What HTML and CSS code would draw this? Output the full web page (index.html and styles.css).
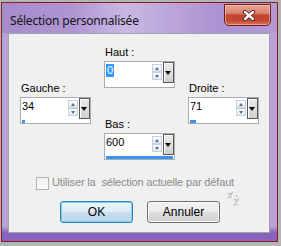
FILE: index.html
```html
<!DOCTYPE html>
<html lang="fr">
<head>
<meta charset="utf-8">
<title>Sélection personnalisée</title>
<link rel="stylesheet" href="styles.css">
</head>
<body>
<div class="window">
  <div class="titlebar">
    <span class="title">Sélection personnalisée</span>
    <div class="close">
      <svg width="14" height="11" viewBox="0 0 14 11">
        <path d="M3 2 L11 9 M11 2 L3 9" stroke="#4a1a14" stroke-width="4.2" stroke-linecap="round" fill="none"/>
        <path d="M3 2 L11 9 M11 2 L3 9" stroke="#ffffff" stroke-width="2.4" stroke-linecap="round" fill="none"/>
      </svg>
    </div>
  </div>
  <div class="frame">
    <div class="client">
      <div class="fields">
        <div class="col col-side">
          <div class="group">
            <div class="label">Gauche :</div>
            <div class="spin">
              <div class="spin-row">
                <div class="val">34</div>
                <div class="arrows"><span class="up"></span><span class="down"></span></div>
                <div class="drop"></div>
              </div>
              <div class="bar"><span class="fill" style="width:3px"></span></div>
            </div>
          </div>
        </div>
        <div class="col col-mid">
          <div class="group">
            <div class="label">Haut :</div>
            <div class="spin">
              <div class="spin-row">
                <div class="val"><span class="sel">0</span></div>
                <div class="arrows"><span class="up"></span><span class="down"></span></div>
                <div class="drop"></div>
              </div>
              <div class="bar"><span class="fill" style="width:0px"></span></div>
            </div>
          </div>
          <div class="group group-bas">
            <div class="label">Bas :</div>
            <div class="spin">
              <div class="spin-row">
                <div class="val">600</div>
                <div class="arrows"><span class="up"></span><span class="down"></span></div>
                <div class="drop"></div>
              </div>
              <div class="bar"><span class="fill" style="width:100%"></span></div>
            </div>
          </div>
        </div>
        <div class="col col-side">
          <div class="group">
            <div class="label">Droite :</div>
            <div class="spin">
              <div class="spin-row">
                <div class="val">71</div>
                <div class="arrows"><span class="up"></span><span class="down"></span></div>
                <div class="drop"></div>
              </div>
              <div class="bar"><span class="fill" style="width:6px"></span></div>
            </div>
          </div>
        </div>
      </div>
      <div class="check">
        <span class="box"></span>
        <span class="check-text">Utiliser la&nbsp; sélection actuelle par défaut</span>
      </div>
      <div class="buttons">
        <div class="btn btn-default">OK</div>
        <div class="btn">Annuler</div>
      </div>
      <svg class="grip" width="16" height="18" viewBox="0 0 16 18">
        <path d="M3 3 L7 5 M4 6 L8 2 M2 8 L7 7 M9 9 L13 11 M10 13 L14 8 M8 15 L13 14 M11 5 L12 7" stroke="#b9b9b9" stroke-width="1.1" fill="none"/>
      </svg>
    </div>
  </div>
</div>
</body>
</html>
```

FILE: styles.css
```css
html, body {
  margin: 0;
  padding: 0;
}
body {
  width: 281px;
  height: 246px;
  overflow: hidden;
  background: #b4b4b4;
  font-family: "Liberation Sans", Arial, sans-serif;
  font-size: 11px;
  color: #000;
}
.window {
  margin: 2px 0 0 1px;
  width: 277px;
  height: 240px;
  box-sizing: border-box;
  border: 1px solid #8c1d1d;
  background: #b8a3d9;
  display: flex;
  flex-direction: column;
}
.titlebar {
  height: 30px;
  flex: none;
  display: flex;
  justify-content: space-between;
  align-items: flex-start;
  background: linear-gradient(90deg, #a48bcb 0%, #ae95d2 25%, #c9b8e3 45%, #bca7db 60%, #ab91d1 80%, #b29ad5 100%);
}
.title {
  font-family: "Noto Sans", "Open Sans", sans-serif;
  font-size: 12px;
  line-height: 16px;
  color: #151515;
  margin: 10px 0 0 8px;
  letter-spacing: -0.2px;
}
.close {
  width: 47px;
  height: 22px;
  box-sizing: border-box;
  margin: 1px 6px 0 0;
  border: 1px solid #6a2219;
  border-radius: 0 0 5px 5px;
  background: linear-gradient(#e7a597 0%, #d98272 40%, #c3432f 52%, #c44a35 78%, #d9735e 100%);
  box-shadow: inset 0 0 0 1px rgba(255, 220, 210, 0.45);
  display: flex;
  align-items: center;
  justify-content: center;
}
.close svg {
  display: block;
  margin-left: 3px;
}
.frame {
  flex: 1;
  padding: 0 7px 8px 6px;
  display: flex;
  background: linear-gradient(#b8a3d9 0%, #b8a3d9 93%, #8862bd 96%, #8862bd 100%);
}
.client {
  position: relative;
  flex: 1;
  background: #f0f0f0;
  border: 1px solid #a3a1ad;
}
.fields {
  display: flex;
  gap: 13px;
  padding: 11px 0 0 11px;
}
.col {
  width: 71px;
  display: flex;
  flex-direction: column;
}
.col-side {
  padding-top: 36px;
}
.group-bas {
  margin-top: 29px;
}
.label {
  line-height: 14px;
  height: 14px;
  margin-bottom: 2px;
  padding-left: 1px;
}
.spin {
  width: 71px;
  height: 27px;
  box-sizing: border-box;
  border: 1px solid #acacb4;
  background: #fff;
  display: flex;
  flex-direction: column;
}
.spin-row {
  display: flex;
  height: 21px;
}
.val {
  flex: 1;
  padding: 2px 0 0 1px;
  line-height: 13px;
  height: 13px;
}
.sel {
  display: inline-block;
  background: #3399ff;
  color: #fff;
  padding: 0 1px;
  line-height: 13px;
}
.arrows {
  width: 10px;
  margin-top: 2px;
  display: flex;
  flex-direction: column;
}
.up, .down {
  height: 8px;
  box-sizing: border-box;
  border: 1px solid #c9d1de;
  background: linear-gradient(#fbfcfe, #e6ebf3);
  position: relative;
}
.up::after, .down::after {
  content: "";
  position: absolute;
  left: 2px;
  top: 2px;
  border-left: 2px solid transparent;
  border-right: 2px solid transparent;
}
.up::after {
  border-bottom: 3px solid #5a6d97;
}
.down::after {
  border-top: 3px solid #5a6d97;
}
.drop {
  width: 11px;
  height: 21px;
  box-sizing: border-box;
  margin-left: 1px;
  border: 1px solid #585858;
  background: linear-gradient(#ececec, #cfcfcf);
  box-shadow: inset 1px 1px 0 #ffffff;
  position: relative;
}
.drop::after {
  content: "";
  position: absolute;
  left: 1px;
  top: 8px;
  border-left: 3px solid transparent;
  border-right: 3px solid transparent;
  border-top: 4px solid #000;
}
.bar {
  height: 4px;
  display: flex;
  align-items: flex-end;
  padding: 0 1px;
}
.fill {
  display: block;
  height: 3px;
  background: #3a93ee;
}
.check {
  display: flex;
  align-items: flex-start;
  margin: 17px 0 0 27px;
  height: 13px;
}
.box {
  width: 13px;
  height: 13px;
  box-sizing: border-box;
  border: 1px solid #b3b3b3;
  background: linear-gradient(#f0f0f0, #fbfbfb);
  flex: none;
}
.check-text {
  margin-left: 3px;
  margin-top: -1px;
  line-height: 13px;
  color: #8b8b8b;
  letter-spacing: -0.15px;
}
.buttons {
  display: flex;
  gap: 14px;
  margin: 11px 0 0 51px;
}
.btn {
  width: 73px;
  height: 22px;
  box-sizing: border-box;
  border: 1px solid #707070;
  border-radius: 3px;
  background: linear-gradient(#f2f2f2 0%, #ebebeb 50%, #dddddd 51%, #cfcfcf 100%);
  box-shadow: inset 0 0 0 1px #fcfcfc;
  display: flex;
  align-items: center;
  justify-content: center;
  font-size: 12px;
  color: #000;
}
.btn-default {
  border-color: #3c7fb1;
  background: linear-gradient(#eef7fc 0%, #dcecf7 50%, #c8e0f1 51%, #b9d6ec 100%);
  box-shadow: inset 0 0 0 1px #74d3f5;
}
.grip {
  position: absolute;
  left: 216px;
  top: 156px;
}
```
